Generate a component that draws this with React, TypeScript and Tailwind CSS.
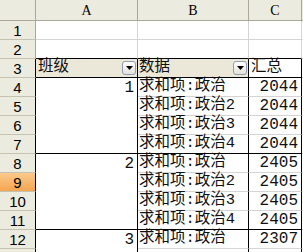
import React from "react";

const FONT = { fontFamily: '"Liberation Mono", "Noto Sans CJK SC", monospace' };

function DropBtn() {
  return (
    <div className="w-[14px] h-[14px] shrink-0 rounded-[3px] border border-[#8f9cb3] bg-gradient-to-b from-[#ffffff] to-[#e3e1d8] flex items-center justify-center">
      <svg width="7" height="4" viewBox="0 0 7 4">
        <path d="M0 0 H7 L3.5 4 Z" fill="#000" />
      </svg>
    </div>
  );
}

type Row = { n: number; a?: string; b?: string; c?: string; groupEnd?: boolean };

const rows: Row[] = [
  { n: 4, a: "1", b: "求和项:政治", c: "2044" },
  { n: 5, b: "求和项:政治2", c: "2044" },
  { n: 6, b: "求和项:政治3", c: "2044" },
  { n: 7, b: "求和项:政治4", c: "2044", groupEnd: true },
  { n: 8, a: "2", b: "求和项:政治", c: "2405" },
  { n: 9, b: "求和项:政治2", c: "2405" },
  { n: 10, b: "求和项:政治3", c: "2405" },
  { n: 11, b: "求和项:政治4", c: "2405", groupEnd: true },
  { n: 12, a: "3", b: "求和项:政治", c: "2307" },
];

function RowHead({ n, sel, dark }: { n: number; sel?: boolean; dark?: boolean }) {
  return (
    <div
      className={`w-[36px] h-[19px] shrink-0 flex items-center justify-center border-b border-b-[#c5c2b2] border-r ${
        dark ? "border-r-black" : "border-r-[#aca899]"
      } ${sel ? "bg-gradient-to-b from-[#fbc98a] to-[#f5a550]" : "bg-[#ecebe0]"} text-[15px] leading-none text-black`}
      style={{ fontFamily: '"Liberation Sans", Arial, sans-serif' }}
    >
      {n}
    </div>
  );
}

export default function App() {
  return (
    <div className="w-[303px] h-[252px] overflow-hidden bg-white text-[#111]" style={FONT}>
      {/* column header */}
      <div className="flex h-[21px]">
        <div className="w-[36px] shrink-0 bg-[#ecebe0] border-r border-b border-[#aca899]" />
        {[
          ["A", "w-[102px]"],
          ["B", "w-[111px]"],
          ["C", "w-[53px]"],
        ].map(([l, w]) => (
          <div
            key={l}
            className={`${w} shrink-0 bg-[#ecebe0] border-r border-b border-[#aca899] flex items-center justify-center text-[14px] text-black`}
            style={{ fontFamily: '"Liberation Serif", serif' }}
          >
            {l}
          </div>
        ))}
        <div className="flex-1 bg-[#ecebe0] border-b border-[#aca899]" />
      </div>

      {/* rows 1-2 */}
      {[1, 2].map((n) => (
        <div key={n} className="flex h-[19px]">
          <RowHead n={n} />
          <div className={`w-[102px] shrink-0 border-r border-r-[#d4d4d4] border-b ${n === 2 ? "border-b-black" : "border-b-[#d4d4d4]"}`} />
          <div className={`w-[111px] shrink-0 border-r border-r-[#d4d4d4] border-b ${n === 2 ? "border-b-black" : "border-b-[#d4d4d4]"}`} />
          <div className={`w-[53px] shrink-0 border-r border-r-[#d4d4d4] border-b ${n === 2 ? "border-b-black" : "border-b-[#d4d4d4]"}`} />
          <div className="flex-1 border-b border-[#d4d4d4]" />
        </div>
      ))}

      {/* row 3 */}
      <div className="flex h-[19px]">
        <RowHead n={3} dark />
        <div className="w-[102px] shrink-0 bg-[#ebe7d9] border-r border-b border-black flex items-center pl-[2px] pr-[1px] text-[15.5px] leading-none">
          <span className="flex-1">班级</span>
          <DropBtn />
        </div>
        <div className="w-[111px] shrink-0 bg-[#ebe7d9] border-r border-b border-black flex items-center pl-[1px] pr-[1px] text-[15.5px] leading-none">
          <span className="flex-1">数据</span>
          <DropBtn />
        </div>
        <div className="w-[53px] shrink-0 border-r border-b border-black flex items-center pl-[2px] text-[15.5px] leading-none">
          汇总
        </div>
        <div className="flex-1 border-b border-[#d4d4d4]" />
      </div>

      {rows.map((r) => (
        <div key={r.n} className="flex h-[19px]">
          <RowHead n={r.n} sel={r.n === 9} dark />
          <div
            className={`w-[102px] shrink-0 border-r border-r-black flex items-center justify-end pr-[3px] text-[16px] leading-none ${
              r.groupEnd ? "border-b border-b-black" : ""
            }`}
          >
            {r.a}
          </div>
          <div
            className={`w-[111px] shrink-0 border-r border-r-black border-b flex items-center pl-[1px] text-[15.5px] leading-none whitespace-nowrap ${
              r.groupEnd ? "border-b-black" : "border-b-[#d4d4d4]"
            }`}
          >
            {r.b}
          </div>
          <div
            className={`w-[53px] shrink-0 border-r border-r-black border-b flex items-center justify-end pr-[3px] text-[16px] leading-none ${
              r.groupEnd ? "border-b-black" : "border-b-[#d4d4d4]"
            }`}
          >
            {r.c}
          </div>
          <div className="flex-1 border-b border-[#d4d4d4]" />
        </div>
      ))}
      <div className="flex h-[10px]">
        <div className="w-[36px] shrink-0 bg-[#ecebe0] border-r border-black" />
        <div className="w-[102px] shrink-0 border-r border-black" />
        <div className="w-[111px] shrink-0 border-r border-black" />
        <div className="w-[53px] shrink-0 border-r border-black" />
      </div>
    </div>
  );
}
